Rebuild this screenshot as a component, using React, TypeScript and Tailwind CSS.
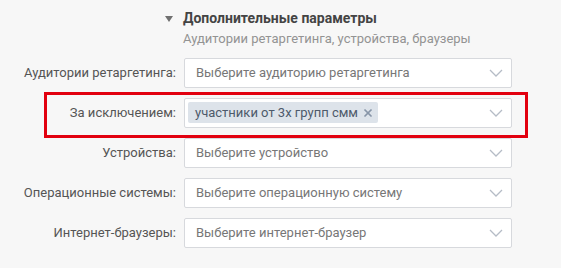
import { X } from 'lucide-react';

const rows = [
  { label: 'Аудитории ретаргетинга:', placeholder: 'Выберите аудиторию ретаргетинга' },
  { label: 'За исключением:', tag: 'участники от 3х групп смм', marked: true },
  { label: 'Устройства:', placeholder: 'Выберите устройство' },
  { label: 'Операционные системы:', placeholder: 'Выберите операционную систему' },
  { label: 'Интернет-браузеры:', placeholder: 'Выберите интернет-браузер' },
];

type Row = { label: string; placeholder?: string; tag?: string; marked?: boolean };

const Chevron = () => (
  <svg width="14" height="8" viewBox="0 0 14 8" className="ml-auto">
    <path d="M1 1 L7 7 L13 1" fill="none" stroke="#b5bcc6" strokeWidth="1.3" />
  </svg>
);

const FieldRow = ({ row }: { row: Row }) => (
  <div className="relative flex items-center h-[30px]">
    <div className="w-[176px] text-right text-[13px] text-[#555] whitespace-nowrap">
      {row.label}
    </div>
    <div className="ml-[8px] w-[328px] h-[30px] flex items-center bg-white border border-[#d7d9dd] rounded-[2px] pl-[3px] pr-[8px]">
      {row.tag ? (
        <span className="flex items-center h-[21px] bg-[#dde3ea] rounded-[2px] pl-[7px] pr-[4px] text-[13px] text-[#4d5a6b]">
          {row.tag}
          <X className="ml-[4px] w-[12px] h-[12px] text-[#8795a8]" strokeWidth={3.5} />
        </span>
      ) : (
        <span className="pl-[8px] text-[13px] text-[#777]">{row.placeholder}</span>
      )}
      <Chevron />
    </div>
    {row.marked && (
      <div className="absolute left-[44px] top-[-6px] w-[484px] h-[46px] border-[3px] border-[#e2000f] pointer-events-none" />
    )}
  </div>
);

export default function App() {
  return (
    <div className="w-[561px] h-[268px] bg-[#f7f7f7] font-['Roboto',sans-serif] pt-[8px]">
      <div className="flex items-center pl-[165px]">
        <svg width="8" height="6" viewBox="0 0 8 6" className="mr-[10px]">
          <path d="M0 0 L8 0 L4 6 Z" fill="#707070" />
        </svg>
        <span className="text-[14px] font-bold text-[#444]">Дополнительные параметры</span>
      </div>
      <div className="pl-[183px] text-[13px] text-[#939393]">
        Аудитории ретаргетинга, устройства, браузеры
      </div>
      <div className="mt-[9px] flex flex-col gap-[10px]">
        {rows.map((row, i) => (
          <FieldRow key={i} row={row} />
        ))}
      </div>
    </div>
  );
}
